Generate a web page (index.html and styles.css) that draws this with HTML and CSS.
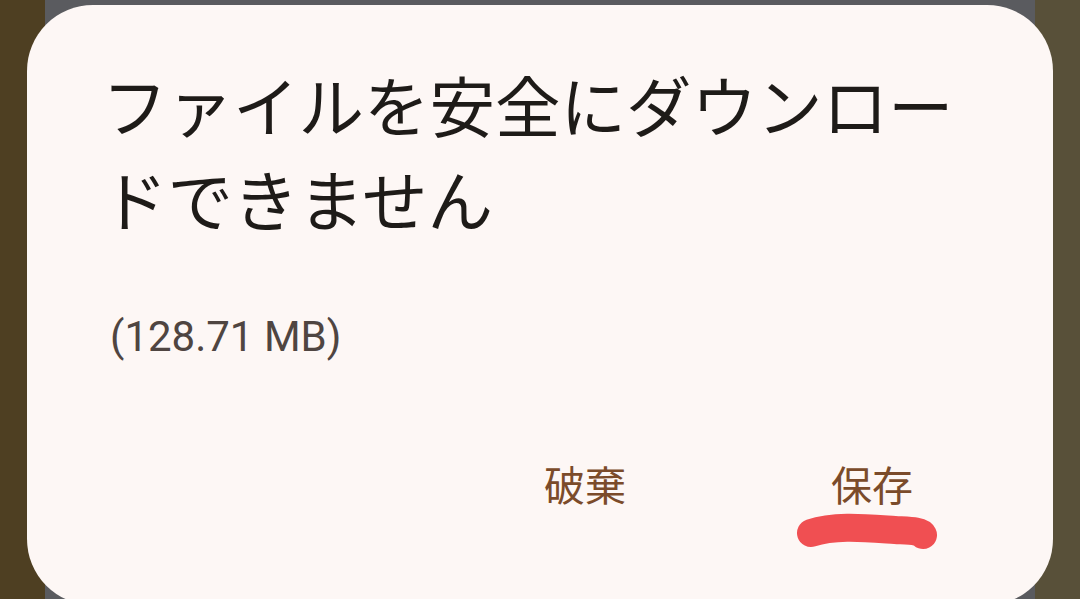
FILE: index.html
```html
<!DOCTYPE html>
<html lang="ja">
<head>
<meta charset="utf-8">
<link rel="stylesheet" href="styles.css">
</head>
<body>
<div class="backdrop">
  <div class="strip strip-left"></div>
  <div class="scrim"></div>
  <div class="strip strip-right"></div>
</div>
<div class="dialog">
  <h1 class="title">ファイルを安全にダウンロードできません</h1>
  <p class="size">(128.71 MB)</p>
  <div class="actions">
    <button class="btn btn-discard">破棄</button>
    <button class="btn btn-save">保存
      <svg class="mark" width="160" height="44" viewBox="0 0 160 44"><path d="M16 22 C40 14 70 17 100 19 C116 20 126 20 128 24" fill="none" stroke="#f04f52" stroke-width="28" stroke-linecap="round"/></svg>
    </button>
  </div>
</div>
</body>
</html>
```
FILE: styles.css
```css
html, body {
  margin: 0;
  padding: 0;
  width: 1080px;
  height: 599px;
  overflow: hidden;
}
body {
  position: relative;
  font-family: "Noto Sans CJK JP", "Noto Sans", sans-serif;
}
.backdrop {
  display: flex;
  height: 599px;
}
.strip {
  width: 45px;
}
.strip-left {
  background: #4e3f22;
}
.strip-right {
  background: #585039;
}
.scrim {
  flex: 1;
  background: #5a5b5f;
}
.dialog {
  position: absolute;
  left: 27px;
  top: 5px;
  width: 1026px;
  height: 600px;
  box-sizing: border-box;
  background: #fdf7f5;
  border-radius: 66px;
  padding: 52px 80px 0 75px;
}
.title {
  margin: 0;
  font-weight: 400;
  font-size: 65.5px;
  line-height: 94px;
  color: #1e1b18;
}
.size {
  margin: 64px 0 0 8px;
  font-family: Roboto, "Noto Sans", sans-serif;
  font-size: 42px;
  line-height: 56px;
  color: #4f4541;
}
.actions {
  display: flex;
  justify-content: flex-end;
  gap: 205px;
  margin-top: 90px;
  padding-right: 60px;
}
.btn {
  position: relative;
  background: none;
  border: none;
  padding: 0;
  font-family: "Noto Sans CJK JP", sans-serif;
  font-size: 41px;
  line-height: 56px;
  color: #7b4b2a;
}
.mark {
  position: absolute;
  left: -36px;
  top: 56px;
}
```
